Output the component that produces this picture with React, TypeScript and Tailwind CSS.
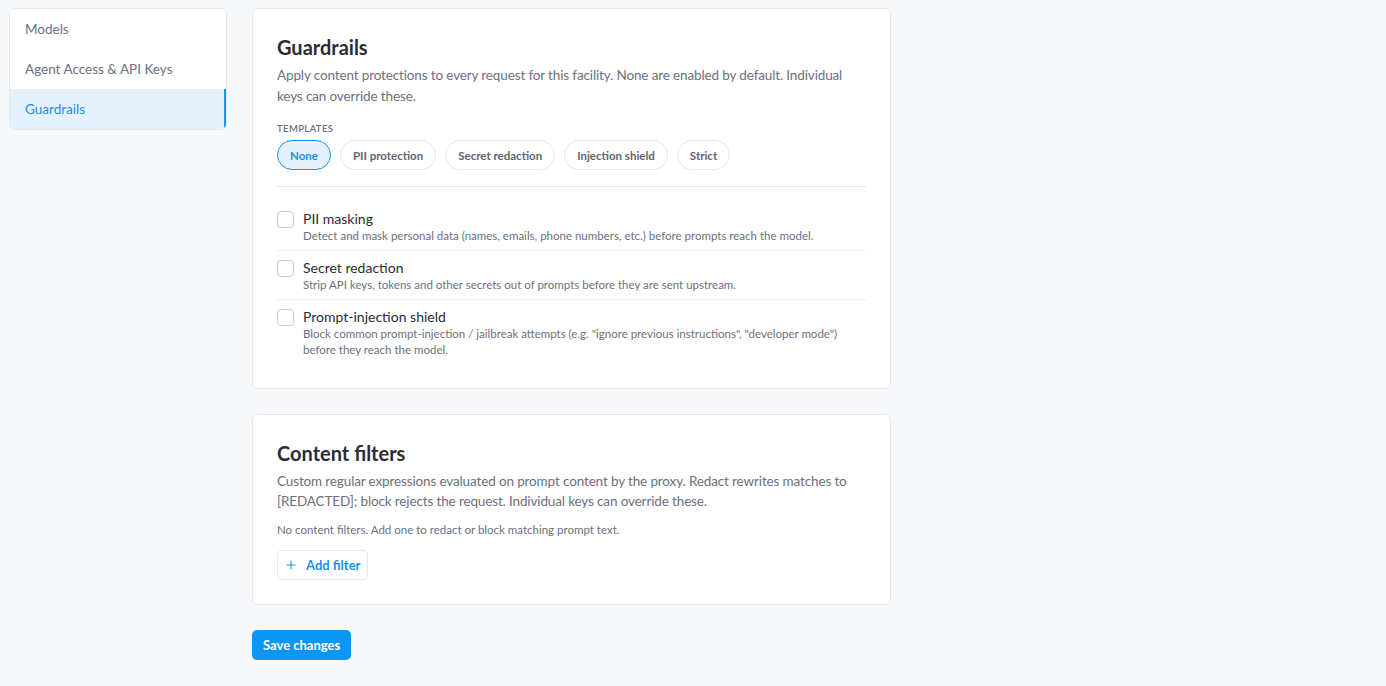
import { Plus } from 'lucide-react'

const sections = [
  { name: 'Models', active: false },
  { name: 'Agent Access & API Keys', active: false },
  { name: 'Guardrails', active: true },
]

const templates = ['None', 'PII protection', 'Secret redaction', 'Injection shield', 'Strict']

const guards = [
  {
    title: 'PII masking',
    desc: ['Detect and mask personal data (names, emails, phone numbers, etc.) before prompts reach the model.'],
  },
  {
    title: 'Secret redaction',
    desc: ['Strip API keys, tokens and other secrets out of prompts before they are sent upstream.'],
  },
  {
    title: 'Prompt-injection shield',
    desc: [
      'Block common prompt-injection / jailbreak attempts (e.g. "ignore previous instructions", "developer mode")',
      'before they reach the model.',
    ],
  },
]

export default function App() {
  return (
    <div
      className="min-h-[686px] bg-[#f7f8fa] px-[9px] pt-[8px] text-[#2b2d36]"
      style={{ fontFamily: 'Lato, "Liberation Sans", sans-serif' }}
    >
      <div className="flex items-start gap-[25px]">
        {/* Settings nav */}
        <nav className="w-[218px] shrink-0 overflow-hidden rounded-md border border-[#e6e8ec] bg-white">
          {sections.map((s) => (
            <div
              key={s.name}
              className={`flex h-10 items-center px-[15px] text-[13.5px] ${
                s.active
                  ? 'border-r-2 border-[#1a94f0] bg-[#e5f2fd] text-[#1a8fe6]'
                  : 'text-[#6b7180]'
              }`}
            >
              {s.name}
            </div>
          ))}
        </nav>

        <div className="flex w-[639px] flex-col">
          {/* Guardrails */}
          <section className="rounded-md border border-[#e6e8ec] bg-white px-6 pt-[25px] pb-[30px]">
            <h2 className="text-[20px] font-bold leading-[26px] text-[#2b2d36]">Guardrails</h2>
            <p className="mt-[5px] text-[13.5px] leading-[21px] tracking-[-0.01em] text-[#6b7180]">
              Apply content protections to every request for this facility. None are enabled by default. Individual
              keys can override these.
            </p>

            <div className="mt-[15px] text-[9.5px] font-semibold uppercase tracking-[0.04em] text-[#6b7180]">
              Templates
            </div>
            <div className="mt-[4px] flex gap-[9px]">
              {templates.map((t, i) => (
                <button
                  key={t}
                  className={`h-[30px] rounded-full border px-[12px] text-[11.5px] font-bold ${
                    i === 0
                      ? 'border-[#1a94f0] bg-[#e5f2fd] text-[#1a8fe6]'
                      : 'border-[#e6e8ec] bg-white text-[#5f6574]'
                  }`}
                >
                  {t}
                </button>
              ))}
            </div>

            <div className="mt-[16px] border-t border-[#e6e8ec]" />

            <div className="mt-[23px] flex flex-col">
              {guards.map((g, i) => (
                <div
                  key={g.title}
                  className={`flex gap-[9px] ${i < guards.length - 1 ? 'mb-[8px] border-b border-[#eceef1] pb-[6px]' : ''}`}
                >
                  <span className="mt-px h-[17px] w-[17px] shrink-0 rounded-[4px] border-[1.5px] border-[#c9ccd3] bg-white" />
                  <div>
                    <div className="text-[14px] leading-[18px] text-[#2b2d36]">{g.title}</div>
                    <div className="text-[11.5px] leading-[16px] text-[#6b7180]">
                      {g.desc.map((d) => (
                        <div key={d}>{d}</div>
                      ))}
                    </div>
                  </div>
                </div>
              ))}
            </div>
          </section>

          {/* Content filters */}
          <section className="mt-[25px] rounded-md border border-[#e6e8ec] bg-white px-6 pt-[25px] pb-[24px]">
            <h2 className="text-[20px] font-bold leading-[26px] text-[#2b2d36]">Content filters</h2>
            <p className="mt-[5px] text-[13.5px] leading-[20px] tracking-[-0.01em] text-[#6b7180]">
              Custom regular expressions evaluated on prompt content by the proxy. Redact rewrites matches to
              [REDACTED]; block rejects the request. Individual keys can override these.
            </p>
            <p className="mt-[11px] text-[11.5px] leading-[16px] text-[#6b7180]">
              No content filters. Add one to redact or block matching prompt text.
            </p>
            <button className="mt-[12px] flex h-[30px] items-center gap-[8px] rounded-[5px] border border-[#e6e8ec] bg-white pl-[6px] pr-[7px] text-[13px] font-bold text-[#1a8fe6]">
              <Plus size={14} strokeWidth={1.8} />
              Add filter
            </button>
          </section>

          <div className="mt-[25px]">
            <button className="h-[30px] rounded-[5px] bg-[#0a96f3] px-[11px] text-[13px] font-bold text-white">
              Save changes
            </button>
          </div>
        </div>
      </div>
    </div>
  )
}
